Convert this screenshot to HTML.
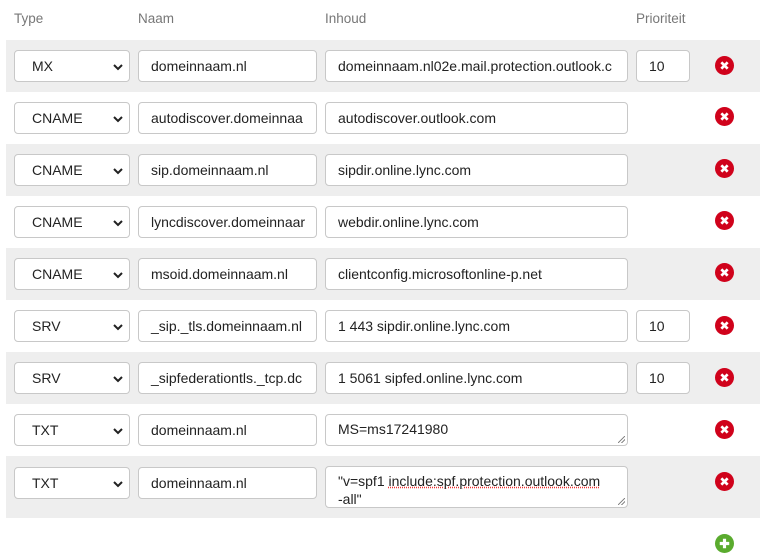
<!DOCTYPE html>
<html><head><meta charset="utf-8"><style>
*{box-sizing:border-box;margin:0;padding:0}
body{width:769px;height:558px;background:#fff;font-family:"Liberation Sans",sans-serif;font-size:14px;color:#222;position:relative;overflow:hidden}
.h{position:absolute;top:11px;color:#777;font-size:13.5px}
.row{position:absolute;left:6px;width:754px}
.g{background:#eee}
.f{position:absolute;background:#fff;border:1px solid #c8c8c8;border-radius:4px;padding-left:12px;white-space:nowrap;overflow:hidden;line-height:31px;height:32px;font-size:14px}
.sel{left:8px;width:116px;padding-left:17px}
.sel svg{position:absolute;right:6px;top:12px}
.nm{left:132px;width:179px}
.ct{left:319px;width:303px}
.pr{left:630px;width:54px}
.x{position:absolute;left:709px;width:19px;height:19px}
.ta{line-height:18px;padding-top:5px}
.ta:after{content:"";position:absolute;right:2px;bottom:2px;width:7px;height:7px;background:linear-gradient(135deg,transparent 45%,#888 45%,#888 55%,transparent 55%,transparent 70%,#888 70%,#888 80%,transparent 80%)}
</style></head><body>
<div class="h" style="left:14px">Type</div>
<div class="h" style="left:138px">Naam</div>
<div class="h" style="left:325px">Inhoud</div>
<div class="h" style="left:636px">Prioriteit</div>
<div class="row g" style="top:40px;height:52px"><div class="f sel" style="top:10px">MX<svg width="10" height="8"><path d="M1 2l4 4 4-4" stroke="#222" stroke-width="2" fill="none"/></svg></div><div class="f nm" style="top:10px">domeinnaam.nl</div><div class="f ct" style="top:10px">domeinnaam.nl02e.mail.protection.outlook.c</div><div class="f pr" style="top:10px">10</div><svg class="x" style="top:16px" viewBox="0 0 18 18"><circle cx="9" cy="9" r="9" fill="#d0021b"/><path d="M6 6l6 6M12 6l-6 6" stroke="#fff" stroke-width="2.6"/></svg></div>
<div class="row" style="top:92px;height:52px"><div class="f sel" style="top:10px">CNAME<svg width="10" height="8"><path d="M1 2l4 4 4-4" stroke="#222" stroke-width="2" fill="none"/></svg></div><div class="f nm" style="top:10px">autodiscover.domeinnaa</div><div class="f ct" style="top:10px">autodiscover.outlook.com</div><svg class="x" style="top:15px" viewBox="0 0 18 18"><circle cx="9" cy="9" r="9" fill="#d0021b"/><path d="M6 6l6 6M12 6l-6 6" stroke="#fff" stroke-width="2.6"/></svg></div>
<div class="row g" style="top:144px;height:52px"><div class="f sel" style="top:10px">CNAME<svg width="10" height="8"><path d="M1 2l4 4 4-4" stroke="#222" stroke-width="2" fill="none"/></svg></div><div class="f nm" style="top:10px">sip.domeinnaam.nl</div><div class="f ct" style="top:10px">sipdir.online.lync.com</div><svg class="x" style="top:15px" viewBox="0 0 18 18"><circle cx="9" cy="9" r="9" fill="#d0021b"/><path d="M6 6l6 6M12 6l-6 6" stroke="#fff" stroke-width="2.6"/></svg></div>
<div class="row" style="top:196px;height:52px"><div class="f sel" style="top:10px">CNAME<svg width="10" height="8"><path d="M1 2l4 4 4-4" stroke="#222" stroke-width="2" fill="none"/></svg></div><div class="f nm" style="top:10px">lyncdiscover.domeinnaar</div><div class="f ct" style="top:10px">webdir.online.lync.com</div><svg class="x" style="top:15px" viewBox="0 0 18 18"><circle cx="9" cy="9" r="9" fill="#d0021b"/><path d="M6 6l6 6M12 6l-6 6" stroke="#fff" stroke-width="2.6"/></svg></div>
<div class="row g" style="top:248px;height:52px"><div class="f sel" style="top:10px">CNAME<svg width="10" height="8"><path d="M1 2l4 4 4-4" stroke="#222" stroke-width="2" fill="none"/></svg></div><div class="f nm" style="top:10px">msoid.domeinnaam.nl</div><div class="f ct" style="top:10px">clientconfig.microsoftonline-p.net</div><svg class="x" style="top:15px" viewBox="0 0 18 18"><circle cx="9" cy="9" r="9" fill="#d0021b"/><path d="M6 6l6 6M12 6l-6 6" stroke="#fff" stroke-width="2.6"/></svg></div>
<div class="row" style="top:300px;height:52px"><div class="f sel" style="top:10px">SRV<svg width="10" height="8"><path d="M1 2l4 4 4-4" stroke="#222" stroke-width="2" fill="none"/></svg></div><div class="f nm" style="top:10px">_sip._tls.domeinnaam.nl</div><div class="f ct" style="top:10px">1 443 sipdir.online.lync.com</div><div class="f pr" style="top:10px">10</div><svg class="x" style="top:16px" viewBox="0 0 18 18"><circle cx="9" cy="9" r="9" fill="#d0021b"/><path d="M6 6l6 6M12 6l-6 6" stroke="#fff" stroke-width="2.6"/></svg></div>
<div class="row g" style="top:352px;height:52px"><div class="f sel" style="top:10px">SRV<svg width="10" height="8"><path d="M1 2l4 4 4-4" stroke="#222" stroke-width="2" fill="none"/></svg></div><div class="f nm" style="top:10px">_sipfederationtls._tcp.dc</div><div class="f ct" style="top:10px">1 5061 sipfed.online.lync.com</div><div class="f pr" style="top:10px">10</div><svg class="x" style="top:16px" viewBox="0 0 18 18"><circle cx="9" cy="9" r="9" fill="#d0021b"/><path d="M6 6l6 6M12 6l-6 6" stroke="#fff" stroke-width="2.6"/></svg></div>
<div class="row" style="top:404px;height:52px"><div class="f sel" style="top:10px">TXT<svg width="10" height="8"><path d="M1 2l4 4 4-4" stroke="#222" stroke-width="2" fill="none"/></svg></div><div class="f nm" style="top:10px">domeinnaam.nl</div><div class="f ct ta" style="top:10px;height:32px">MS=ms17241980</div><svg class="x" style="top:16px" viewBox="0 0 18 18"><circle cx="9" cy="9" r="9" fill="#d0021b"/><path d="M6 6l6 6M12 6l-6 6" stroke="#fff" stroke-width="2.6"/></svg></div>
<div class="row g" style="top:456px;height:62px"><div class="f sel" style="top:11px">TXT<svg width="10" height="8"><path d="M1 2l4 4 4-4" stroke="#222" stroke-width="2" fill="none"/></svg></div><div class="f nm" style="top:11px">domeinnaam.nl</div><div class="f ct ta" style="top:10px;height:42px;white-space:normal">"v=spf1 <span style="text-decoration:underline dotted #e33">include:spf.protection.outlook.com</span><br>-all"</div><svg class="x" style="top:16px" viewBox="0 0 18 18"><circle cx="9" cy="9" r="9" fill="#d0021b"/><path d="M6 6l6 6M12 6l-6 6" stroke="#fff" stroke-width="2.6"/></svg></div>
<svg style="position:absolute;left:715px;top:534px" width="19" height="19" viewBox="0 0 18 18"><circle cx="9" cy="9" r="9" fill="#5aab2e"/><path d="M9 4.5v9M4.5 9h9" stroke="#fff" stroke-width="3"/></svg>
</body></html>
